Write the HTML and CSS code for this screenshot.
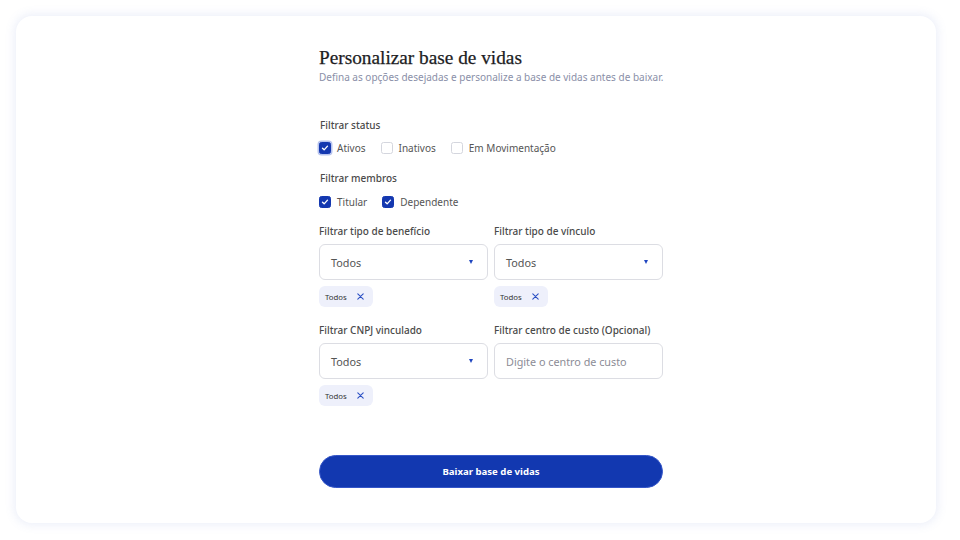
FILE: index.html
```html
<!DOCTYPE html>
<html lang="pt-BR">
<head>
<meta charset="utf-8">
<title>Personalizar base de vidas</title>
<link rel="stylesheet" href="styles.css">
</head>
<body>
<div class="card">
  <div class="content">
    <h1 class="title">Personalizar base de vidas</h1>
    <p class="subtitle">Defina as opções desejadas e personalize a base de vidas antes de baixar.</p>

    <div class="group-label first">Filtrar status</div>
    <div class="checks">
      <label class="check"><span class="box checked focus"><svg viewBox="0 0 12 12"><path d="M3 6.2l2 2 4-4.4" fill="none" stroke="#fff" stroke-width="1.6" stroke-linecap="round" stroke-linejoin="round"/></svg></span>Ativos</label>
      <label class="check"><span class="box"></span>Inativos</label>
      <label class="check"><span class="box"></span>Em Movimentação</label>
    </div>

    <div class="group-label second">Filtrar membros</div>
    <div class="checks last">
      <label class="check"><span class="box checked"><svg viewBox="0 0 12 12"><path d="M3 6.2l2 2 4-4.4" fill="none" stroke="#fff" stroke-width="1.6" stroke-linecap="round" stroke-linejoin="round"/></svg></span>Titular</label>
      <label class="check"><span class="box checked"><svg viewBox="0 0 12 12"><path d="M3 6.2l2 2 4-4.4" fill="none" stroke="#fff" stroke-width="1.6" stroke-linecap="round" stroke-linejoin="round"/></svg></span>Dependente</label>
    </div>

    <div class="grid">
      <div class="field">
        <div class="field-label">Filtrar tipo de benefício</div>
        <div class="select"><span>Todos</span><span class="arrow"></span></div>
        <div class="chips"><span class="chip">Todos<svg viewBox="0 0 10 10"><path d="M2 2l6 6M8 2l-6 6" stroke="#2a4fc4" stroke-width="1.2" stroke-linecap="round"/></svg></span></div>
      </div>
      <div class="field">
        <div class="field-label">Filtrar tipo de vínculo</div>
        <div class="select"><span>Todos</span><span class="arrow"></span></div>
        <div class="chips"><span class="chip">Todos<svg viewBox="0 0 10 10"><path d="M2 2l6 6M8 2l-6 6" stroke="#2a4fc4" stroke-width="1.2" stroke-linecap="round"/></svg></span></div>
      </div>
      <div class="field">
        <div class="field-label">Filtrar CNPJ vinculado</div>
        <div class="select"><span>Todos</span><span class="arrow"></span></div>
        <div class="chips"><span class="chip">Todos<svg viewBox="0 0 10 10"><path d="M2 2l6 6M8 2l-6 6" stroke="#2a4fc4" stroke-width="1.2" stroke-linecap="round"/></svg></span></div>
      </div>
      <div class="field">
        <div class="field-label">Filtrar centro de custo (Opcional)</div>
        <div class="select input"><span class="placeholder">Digite o centro de custo</span></div>
      </div>
    </div>

    <button class="download">Baixar base de vidas</button>
  </div>
</div>
</body>
</html>
```

FILE: styles.css
```css
* { box-sizing: border-box; }
html, body { margin: 0; padding: 0; background: #fff; }
body {
  width: 960px;
  height: 540px;
  padding: 16px 24px 17px 16px;
  font-family: "Noto Sans", "Open Sans", sans-serif;
  color: #4a4a4a;
}
.card {
  height: 507px;
  border-radius: 16px;
  background: #fff;
  box-shadow: 0 0 10px 2px rgba(110, 130, 210, 0.13);
  padding: 31px 0 0 303px;
}
.content { width: 344px; }
.title {
  margin: 0;
  font-family: "Liberation Serif", "DejaVu Serif", serif;
  font-weight: normal;
  font-size: 19.3px;
  line-height: 22px;
  color: #1d1d1f;
  -webkit-text-stroke: 0.25px #1d1d1f;
}
.subtitle {
  margin: 1px 0 0;
  font-size: 10px;
  line-height: 14px;
  color: #8a8fa8;
  white-space: nowrap;
}
.group-label {
  margin: 0 0 9px 1px;
  font-size: 10px;
  line-height: 14px;
  font-weight: 500;
  color: #4a4a4a;
}
.group-label.first { margin-top: 34px; }
.group-label.second { margin-bottom: 10px; }
.checks {
  display: flex;
  gap: 15px;
  margin-bottom: 16px;
}
.checks.last { margin-bottom: 15px; }
.check {
  display: flex;
  align-items: center;
  gap: 6px;
  font-size: 10px;
  line-height: 14px;
  color: #555;
}
.box {
  width: 12px;
  height: 12px;
  border-radius: 2.5px;
  border: 1px solid #d4d6de;
  background: #fff;
  display: flex;
  flex: none;
}
.box.checked {
  background: #1438b0;
  border-color: #1438b0;
}
.box.focus { box-shadow: 0 0 0 1.5px #b8c4ee; }
.box svg { width: 100%; height: 100%; }
.grid {
  display: grid;
  grid-template-columns: 169px 169px;
  column-gap: 6px;
  row-gap: 16px;
  margin-top: 0;
}
.field-label {
  font-size: 10px;
  line-height: 14px;
  font-weight: 500;
  color: #4a4a4a;
  margin-bottom: 6px;
  white-space: nowrap;
}
.select {
  height: 36px;
  border: 1px solid #dcdde3;
  border-radius: 6px;
  display: flex;
  align-items: center;
  justify-content: space-between;
  padding: 0 14px 0 11px;
  font-size: 10.8px;
  color: #555;
}
.arrow {
  width: 0;
  height: 0;
  border-left: 2.5px solid transparent;
  border-right: 2.5px solid transparent;
  border-top: 4px solid #1f45c0;
}
.placeholder { color: #8c8c96; }
.chips { margin-top: 6px; display: flex; }
.chip {
  height: 21px;
  display: inline-flex;
  align-items: center;
  gap: 9px;
  padding: 0 8px 0 6px;
  border-radius: 6px;
  background: #eef0fb;
  font-size: 7.8px;
  color: #333;
}
.chip svg { width: 9px; height: 9px; }
.download {
  display: block;
  width: 344px;
  height: 33px;
  margin-top: 49px;
  border: 1px solid #3556c8;
  border-radius: 17px;
  background: #1238b0;
  color: #fff;
  font-family: "Noto Sans", sans-serif;
  font-weight: 700;
  font-size: 9.6px;
  cursor: pointer;
}
```
